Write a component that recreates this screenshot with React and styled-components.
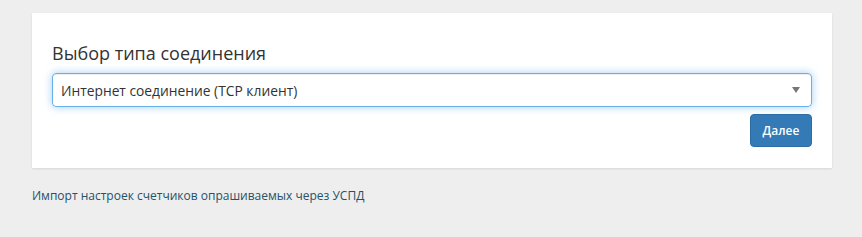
import React from "react";
import styled, { createGlobalStyle } from "styled-components";

const Global = createGlobalStyle`
  html, body { margin: 0; padding: 0; background: #eeeeee; }
  body { font-family: "Open Sans", "Noto Sans", sans-serif; color: #333; }
`;

const Page = styled.div`
  padding: 13px 30px 0 32px;
  width: 800px;
`;

const Card = styled.div`
  background: #fff;
  padding: 28px 20px 21px 20px;
  box-shadow: 0 1px 2px rgba(0, 0, 0, 0.1);
  display: flex;
  flex-direction: column;
`;

const Title = styled.h3`
  margin: 0 0 8px 0;
  font-size: 18px;
  font-weight: 400;
  line-height: 24px;
  color: #333;
`;

const SelectBox = styled.div`
  height: 34px;
  box-sizing: border-box;
  border: 1px solid #66afe9;
  border-radius: 4px;
  box-shadow: inset 0 1px 1px rgba(0, 0, 0, 0.075), 0 0 8px rgba(102, 175, 233, 0.6);
  display: flex;
  align-items: center;
  padding: 0 8px;
  font-size: 13.8px;
  color: #333;
`;

const SelectText = styled.span`
  flex: 1;
`;

const Arrow = styled.span`
  width: 0;
  height: 0;
  border-left: 4px solid transparent;
  border-right: 4px solid transparent;
  border-top: 6px solid #777;
  margin-right: 3px;
`;

const Actions = styled.div`
  display: flex;
  justify-content: flex-end;
  margin-top: 7px;
`;

const Button = styled.button`
  font-family: "Open Sans", "Noto Sans", sans-serif;
  background: #337ab7;
  border: 1px solid #2e6da4;
  color: #fff;
  border-radius: 4px;
  font-size: 12px;
  font-weight: 600;
  height: 33px;
  width: 62px;
  padding: 0;
  cursor: pointer;
`;

const Link = styled.a`
  display: block;
  margin-top: 19px;
  font-size: 12px;
  color: #245269;
  text-decoration: none;
`;

export default function App() {
  return (
    <>
      <Global />
      <Page>
        <Card>
          <Title>Выбор типа соединения</Title>
          <SelectBox>
            <SelectText>Интернет соединение (TCP клиент)</SelectText>
            <Arrow />
          </SelectBox>
          <Actions>
            <Button>Далее</Button>
          </Actions>
        </Card>
        <Link href="#">Импорт настроек счетчиков опрашиваемых через УСПД</Link>
      </Page>
    </>
  );
}
